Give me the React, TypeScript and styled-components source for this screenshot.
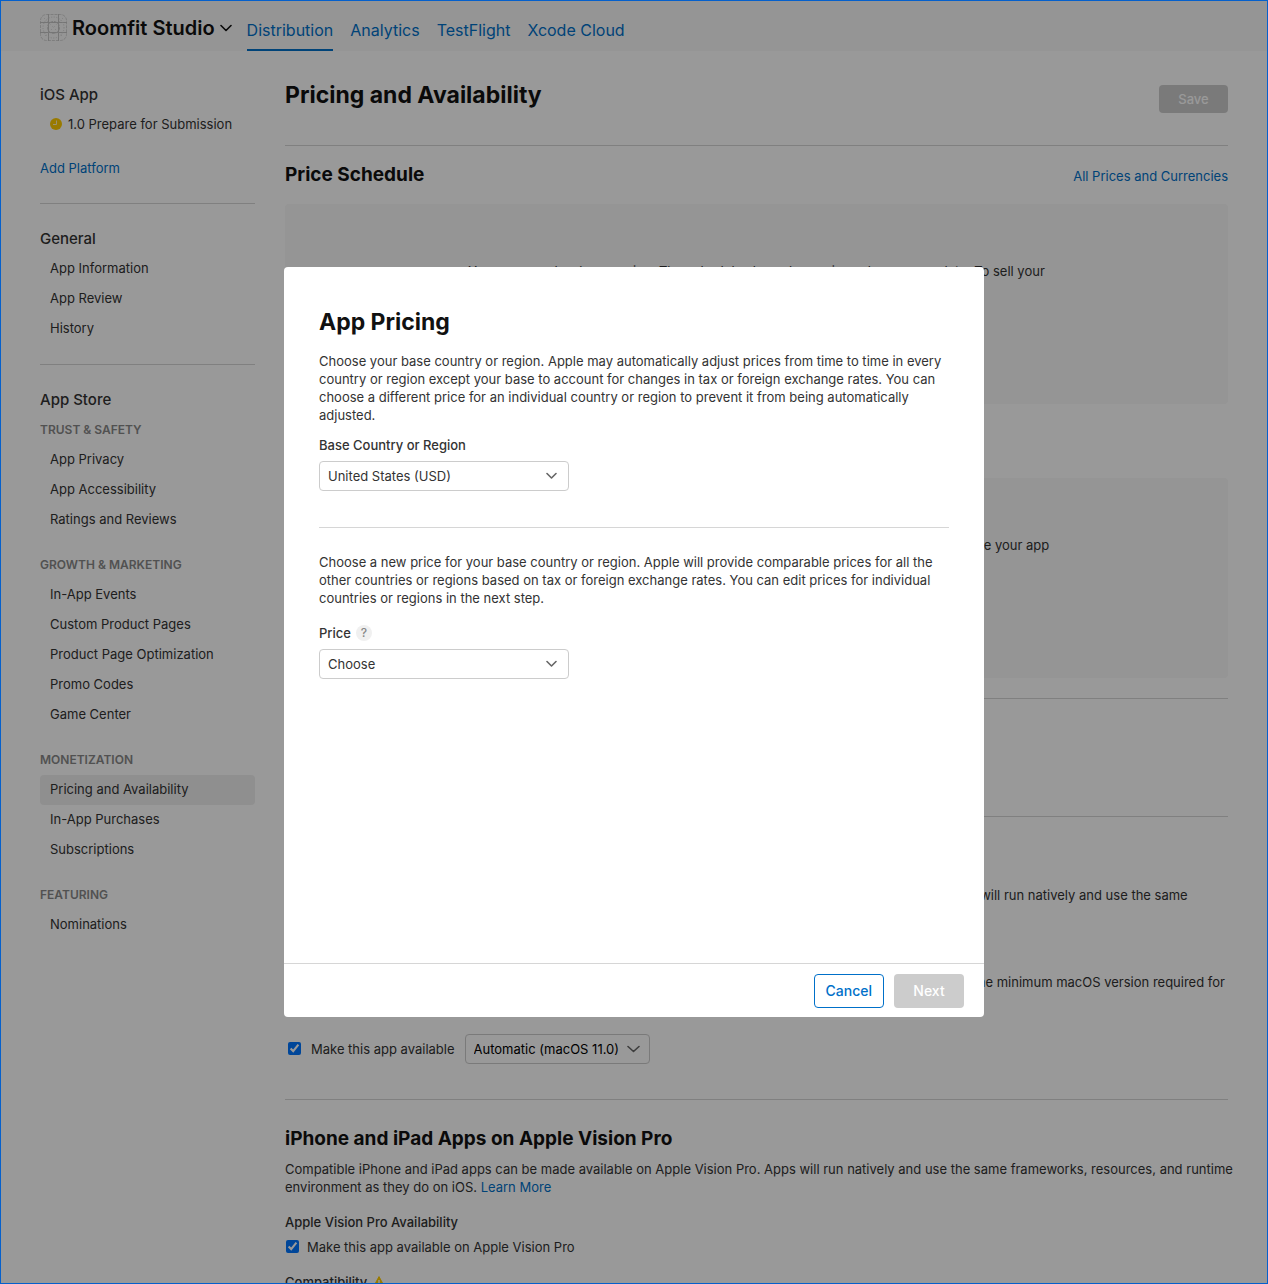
import React from "react";
import styled, { createGlobalStyle, css } from "styled-components";

const color = {
  link: "#0070c9",
  text: "#333333",
  heading: "#111111",
  muted: "#888888",
  line: "#d6d6d6",
  panel: "#f8f8f8",
};

const GlobalStyle = createGlobalStyle`
  *, *::before, *::after { box-sizing: border-box; }
  body {
    margin: 0;
    background: #ffffff;
    color: ${color.text};
    font: 400 13px/18px Inter, "Liberation Sans", sans-serif;
    -webkit-font-smoothing: antialiased;
  }
  h1, h2, h3, p, ul { margin: 0; padding: 0; }
  ul { list-style: none; }
  button, select, input { font: inherit; color: inherit; }
`;

const Page = styled.div`
  position: relative;
  height: 100vh;
  overflow: hidden;
`;

const Header = styled.header`
  display: flex;
  align-items: stretch;
  height: 51px;
  padding: 0 40px;
  background: ${color.panel};
`;

const AppSwitcher = styled.button`
  display: flex;
  align-items: center;
  gap: 5px;
  padding: 4px 0 0;
  margin-right: 15px;
  border: 0;
  background: none;
  color: ${color.heading};
  font-size: 20px;
  line-height: 24px;
  font-weight: 600;
`;

const Tabs = styled.nav`
  display: flex;
  gap: 17px;
`;

const Tab = styled.a<{ $active?: boolean }>`
  padding-top: 19px;
  color: ${color.link};
  font-size: 16px;
  line-height: 22px;
  text-decoration: none;
  border-bottom: 2px solid ${(p) => (p.$active ? color.link : "transparent")};
`;

const Columns = styled.div`
  display: flex;
  gap: 30px;
  padding: 29px 40px 0;
`;

const Sidebar = styled.aside`
  flex: 0 0 215px;
`;

const SideTitle = styled.h2`
  font-size: 15px;
  line-height: 30px;
  font-weight: 500;
`;

const SideCaption = styled.h3`
  font-size: 12px;
  line-height: 30px;
  font-weight: 600;
  color: ${color.muted};
`;

const SideList = styled.ul`
  & + ${SideCaption} {
    margin-top: 15px;
  }
`;

const SideLink = styled.a<{ $active?: boolean }>`
  display: flex;
  align-items: center;
  gap: 6px;
  line-height: 28px;
  padding: 0 10px 2px;
  border-radius: 4px;
  color: inherit;
  text-decoration: none;
  background: ${(p) => (p.$active ? "#efefef" : "transparent")};
`;

const Link = styled.a`
  color: ${color.link};
  text-decoration: none;
`;

const AddPlatform = styled(Link)`
  display: block;
  margin-top: 13px;
  line-height: 30px;
`;

const SideRule = styled.hr`
  height: 1px;
  margin: 20px 0;
  border: 0;
  background: ${color.line};
`;

const Main = styled.main`
  flex: 1;
  min-width: 0;
`;

const TitleRow = styled.div`
  display: flex;
  justify-content: space-between;
  align-items: flex-end;
  padding-bottom: 32px;
  height: 65px;
`;

const PageTitle = styled.h1`
  align-self: flex-start;
  font-size: 23px;
  line-height: 30px;
  font-weight: 700;
  color: ${color.heading};
`;

const Button = styled.button<{ $kind: "outline" | "disabled"; $small?: boolean }>`
  min-width: ${(p) => (p.$small ? 69 : 70)}px;
  height: ${(p) => (p.$small ? 28 : 34)}px;
  padding: 0 11px;
  border-radius: 4px;
  font-size: ${(p) => (p.$small ? 13 : 14)}px;
  font-weight: 500;
  ${(p) =>
    p.$kind === "outline"
      ? css`
          border: 1px solid ${color.link};
          background: #ffffff;
          color: ${color.link};
        `
      : css`
          border: 0;
          background: #cccccc;
          color: #ffffff;
        `}
`;

const Section = styled.section<{ $ruled?: boolean; $top: number; $bottom: number }>`
  padding: ${(p) => p.$top}px 0 ${(p) => p.$bottom}px;
  border-top: ${(p) => (p.$ruled ? `1px solid ${color.line}` : "0")};
`;

const SectionHead = styled.div<{ $gap?: number }>`
  display: flex;
  align-items: baseline;
  justify-content: space-between;
  margin-bottom: ${(p) => p.$gap ?? 15}px;
`;

const SectionTitle = styled.h2`
  font-size: 19px;
  line-height: 28px;
  font-weight: 700;
  color: ${color.heading};
`;

const SectionText = styled.p`
  margin-right: -10px;
`;

const SubTitle = styled.h3<{ $gap?: number }>`
  display: flex;
  align-items: center;
  gap: 5px;
  margin: 17px 0 ${(p) => p.$gap ?? 7}px;
  font-size: 13px;
  line-height: 18px;
  font-weight: 500;
`;

const EmptyPanel = styled.div`
  display: flex;
  flex-direction: column;
  align-items: center;
  justify-content: center;
  gap: 20px;
  height: 200px;
  border-radius: 4px;
  background: ${color.panel};
  text-align: center;

  p { max-width: 600px; }
`;

const CheckRow = styled.div`
  display: flex;
  align-items: center;
  gap: 8px;
  padding-left: 1px;
`;

const Check = styled.input.attrs({ type: "checkbox" })`
  width: 13px;
  height: 13px;
  margin: 0 0 2px;
`;

const MacRow = styled(CheckRow)`
  gap: 10px;
  margin-top: 25px;
  padding-left: 3px;
`;

const SelectBox = styled.div<{ $width: number }>`
  position: relative;
  width: ${(p) => p.$width}px;

  svg {
    position: absolute;
    top: 10px;
    right: ${(p) => (p.$width > 200 ? 12 : 10)}px;
    pointer-events: none;
  }
`;

const Select = styled.select`
  display: block;
  width: 100%;
  height: 30px;
  padding: 0 8px;
  border: 1px solid #cccccc;
  border-radius: 4px;
  background: transparent;
  appearance: none;
`;

const MacSelect = styled(Select)`
  color: #000000;
`;

const Overlay = styled.div`
  position: absolute;
  inset: 0;
  display: flex;
  align-items: center;
  justify-content: center;
  border: 1px solid #0560cc;
  background: rgba(0, 0, 0, 0.4);
`;

const Dialog = styled.div`
  display: flex;
  flex-direction: column;
  width: 700px;
  max-width: 100%;
  height: 750px;
  max-height: 100%;
  border-radius: 4px;
  background: #ffffff;
`;

const DialogBody = styled.div`
  flex: 1;
  padding: 40px 35px;
`;

const DialogTitle = styled.h2`
  margin-bottom: 15px;
  font-size: 23px;
  line-height: 30px;
  font-weight: 700;
  color: ${color.heading};
`;

const FieldHead = styled.div<{ $top: number }>`
  display: flex;
  align-items: center;
  gap: 5px;
  height: 18px;
  margin: ${(p) => p.$top}px 0 7px;
  font-weight: 500;
`;

const Help = styled.button`
  width: 16px;
  height: 16px;
  padding: 0;
  border: 0;
  border-radius: 50%;
  background: #f0f0f0;
  color: ${color.muted};
  font-size: 12px;
  line-height: 16px;
  font-weight: 500;
`;

const DialogRule = styled.hr`
  height: 1px;
  margin: 36px 0 25px;
  border: 0;
  background: ${color.line};
`;

const DialogFooter = styled.footer`
  display: flex;
  justify-content: flex-end;
  gap: 10px;
  height: 54px;
  padding: 10px 20px;
  border-top: 1px solid ${color.line};
`;

const Chevron = ({ width, stroke }: { width: number; stroke: string }) => (
  <svg width={width} height={10} viewBox={`0 0 ${width} 10`} fill="none" aria-hidden="true">
    <path
      d={`M1 2.5 L${width / 2} ${width > 11 ? 7.5 : 7} L${width - 1} 2.5`}
      stroke={stroke}
      strokeWidth="1.6"
      strokeLinecap="round"
      strokeLinejoin="round"
    />
  </svg>
);

const AppIcon = () => (
  <svg width="27" height="27" viewBox="0 0 27 27" fill="none" stroke="#d2d2d2" aria-hidden="true">
    <rect x="0.5" y="0.5" width="26" height="26" rx="6" strokeDasharray="3 1" />
    <path d="M8.5 0V27M18.5 0V27M0 8.5H27M0 18.5H27" stroke="#c4c4c4" />
    <circle cx="13.5" cy="13.5" r="10.5" strokeDasharray="1 1.6" />
    <circle cx="13.5" cy="13.5" r="6" strokeDasharray="3 1" stroke="#cacaca" />
    <path d="M4 4L23 23M23 4L4 23" strokeDasharray="1 3" />
  </svg>
);

const PendingIcon = () => (
  <svg width="12" height="12" viewBox="0 0 12 12" aria-hidden="true">
    <circle cx="6" cy="6" r="6" fill="#ffcc00" />
    <path d="M6.5 2.5V6.5H3" fill="none" stroke="#fff3c0" strokeWidth="1" />
  </svg>
);

const WarningIcon = () => (
  <svg width="14" height="13" viewBox="0 0 14 13" aria-hidden="true">
    <path d="M7 0.6L13.4 12.4H0.6Z" fill="#ffcc00" stroke="#ffcc00" strokeLinejoin="round" />
    <path d="M7 4V8.5M7 9.8V11.2" stroke="#ffffff" strokeWidth="1.4" />
  </svg>
);

type Group = { caption: string; items: string[] };

const storeGroups: Group[] = [
  { caption: "TRUST & SAFETY", items: ["App Privacy", "App Accessibility", "Ratings and Reviews"] },
  {
    caption: "GROWTH & MARKETING",
    items: [
      "In-App Events",
      "Custom Product Pages",
      "Product Page Optimization",
      "Promo Codes",
      "Game Center",
    ],
  },
  { caption: "MONETIZATION", items: ["Pricing and Availability", "In-App Purchases", "Subscriptions"] },
  { caption: "FEATURING", items: ["Nominations"] },
];

const NavItems = ({ items, active }: { items: string[]; active?: string }) => (
  <SideList>
    {items.map((item) => (
      <li key={item}>
        <SideLink href="#" $active={item === active}>
          {item}
        </SideLink>
      </li>
    ))}
  </SideList>
);

export default function App() {
  return (
    <>
      <GlobalStyle />
      <Page>
        <Header>
          <AppSwitcher>
            <AppIcon />
            Roomfit Studio
            <Chevron width={12} stroke={color.heading} />
          </AppSwitcher>
          <Tabs>
            {["Distribution", "Analytics", "TestFlight", "Xcode Cloud"].map((tab, i) => (
              <Tab key={tab} href="#" $active={i === 0}>
                {tab}
              </Tab>
            ))}
          </Tabs>
        </Header>

        <Columns>
          <Sidebar>
            <SideTitle>iOS App</SideTitle>
            <SideLink href="#">
              <PendingIcon />
              1.0 Prepare for Submission
            </SideLink>
            <AddPlatform href="#">Add Platform</AddPlatform>
            <SideRule />
            <SideTitle>General</SideTitle>
            <NavItems items={["App Information", "App Review", "History"]} />
            <SideRule />
            <SideTitle>App Store</SideTitle>
            {storeGroups.map((group) => (
              <React.Fragment key={group.caption}>
                <SideCaption>{group.caption}</SideCaption>
                <NavItems items={group.items} active="Pricing and Availability" />
              </React.Fragment>
            ))}
          </Sidebar>

          <Main>
            <TitleRow>
              <PageTitle>Pricing and Availability</PageTitle>
              <Button $kind="disabled" $small disabled>
                Save
              </Button>
            </TitleRow>

            <Section $ruled $top={15} $bottom={0}>
              <SectionHead>
                <SectionTitle>Price Schedule</SectionTitle>
                <Link href="#">All Prices and Currencies</Link>
              </SectionHead>
              <EmptyPanel>
                <p>
                  Your app needs a base region. The schedule shows how prices change on a date. To sell your
                  app, you need to add a price.
                </p>
                <Button $kind="outline" $small>Add Pricing</Button>
              </EmptyPanel>
            </Section>

            <Section $top={31} $bottom={20}>
              <SectionHead>
                <SectionTitle>App Availability</SectionTitle>
              </SectionHead>
              <EmptyPanel>
                <p>
                  Choose the countries or regions in which customers can download your app. To make your app
                  available, set up availability.
                </p>
                <Button $kind="outline" $small>Set Up Availability</Button>
              </EmptyPanel>
            </Section>

            <Section $ruled $top={26} $bottom={36}>
              <SectionHead $gap={9}>
                <SectionTitle>Tax Category</SectionTitle>
              </SectionHead>
              <p>App Store software</p>
            </Section>

            <Section $ruled $top={34} $bottom={35}>
              <SectionHead $gap={7}>
                <SectionTitle>iPhone and iPad Apps on Apple Silicon Macs</SectionTitle>
              </SectionHead>
              <SectionText>
                Compatible iPhone and iPad apps can be made available on the Mac App Store on Macs with Apple
                silicon. Apps will run natively and use the same frameworks, resources, and runtime environment
                as they do on iOS.
              </SectionText>
              <SubTitle $gap={16}>Apple Silicon Mac Availability</SubTitle>
              <SectionText>
                Your app can also be offered to customers on compatible Macs. By default, the App Store will
                automatically use the minimum macOS version required for your app.
              </SectionText>
              <MacRow>
                <Check id="mac" defaultChecked />
                <label htmlFor="mac">Make this app available</label>
                <SelectBox $width={185}>
                  <MacSelect aria-label="Minimum macOS version">
                    <option>Automatic (macOS 11.0)</option>
                  </MacSelect>
                  <Chevron width={13} stroke="#666666" />
                </SelectBox>
              </MacRow>
            </Section>

            <Section $ruled $top={25} $bottom={0}>
              <SectionHead $gap={7}>
                <SectionTitle>iPhone and iPad Apps on Apple Vision Pro</SectionTitle>
              </SectionHead>
              <SectionText>
                Compatible iPhone and iPad apps can be made available on Apple Vision Pro. Apps will run natively
                and use the same frameworks, resources, and runtime environment as they do on iOS.{" "}
                <Link href="#">Learn More</Link>
              </SectionText>
              <SubTitle>Apple Vision Pro Availability</SubTitle>
              <CheckRow>
                <Check id="vision" defaultChecked />
                <label htmlFor="vision">Make this app available on Apple Vision Pro</label>
              </CheckRow>
              <SubTitle>
                Compatibility <WarningIcon />
              </SubTitle>
            </Section>
          </Main>
        </Columns>

        <Overlay>
          <Dialog role="dialog" aria-modal="true" aria-labelledby="dialog-title">
            <DialogBody>
              <DialogTitle id="dialog-title">App Pricing</DialogTitle>
              <p>
                Choose your base country or region. Apple may automatically adjust prices from time to time in
                every country or region except your base to account for changes in tax or foreign exchange rates.
                You can choose a different price for an individual country or region to prevent it from being
                automatically adjusted.
              </p>
              <FieldHead $top={12}>
                <label htmlFor="region">Base Country or Region</label>
              </FieldHead>
              <SelectBox $width={250}>
                <Select id="region">
                  <option>United States (USD)</option>
                </Select>
                <Chevron width={11} stroke="#666666" />
              </SelectBox>
              <DialogRule />
              <p>
                Choose a new price for your base country or region. Apple will provide comparable prices for all
                the other countries or regions based on tax or foreign exchange rates. You can edit prices for
                individual countries or regions in the next step.
              </p>
              <FieldHead $top={17}>
                <label htmlFor="price">Price</label>
                <Help aria-label="About prices">?</Help>
              </FieldHead>
              <SelectBox $width={250}>
                <Select id="price">
                  <option>Choose</option>
                </Select>
                <Chevron width={11} stroke="#666666" />
              </SelectBox>
            </DialogBody>
            <DialogFooter>
              <Button $kind="outline">Cancel</Button>
              <Button $kind="disabled" disabled>
                Next
              </Button>
            </DialogFooter>
          </Dialog>
        </Overlay>
      </Page>
    </>
  );
}
